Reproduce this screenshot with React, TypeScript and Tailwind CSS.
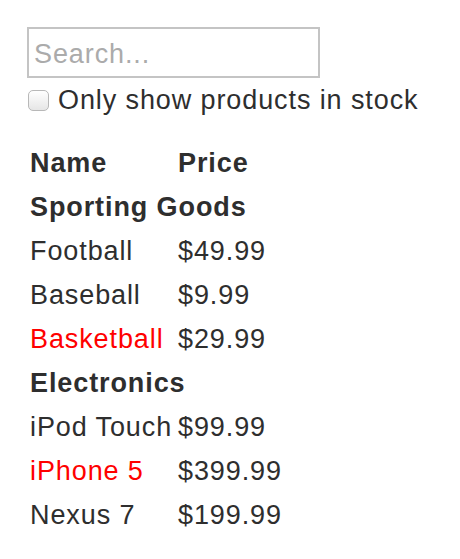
import React from 'react';

type Product = { category: string; price: string; stocked: boolean; name: string };

const products: Product[] = [
  { category: 'Sporting Goods', price: '$49.99', stocked: true, name: 'Football' },
  { category: 'Sporting Goods', price: '$9.99', stocked: true, name: 'Baseball' },
  { category: 'Sporting Goods', price: '$29.99', stocked: false, name: 'Basketball' },
  { category: 'Electronics', price: '$99.99', stocked: true, name: 'iPod Touch' },
  { category: 'Electronics', price: '$399.99', stocked: false, name: 'iPhone 5' },
  { category: 'Electronics', price: '$199.99', stocked: true, name: 'Nexus 7' },
];

const App: React.FC = () => {
  const rows: React.ReactNode[] = [];
  let lastCategory = '';
  products.forEach((p) => {
    if (p.category !== lastCategory) {
      rows.push(
        <tr key={p.category} className="h-[44px]">
          <th colSpan={2} className="text-left font-bold pl-[3px] p-0">
            {p.category}
          </th>
        </tr>
      );
      lastCategory = p.category;
    }
    rows.push(
      <tr key={p.name} className="h-[44px]">
        <td className={`pl-[3px] p-0 ${p.stocked ? '' : 'text-[#ff0000]'}`}>{p.name}</td>
        <td className="p-0">{p.price}</td>
      </tr>
    );
  });

  return (
    <div
      className="min-h-screen bg-white pl-[27px] pt-[27px] text-[27px] leading-[32px] tracking-[0.9px] text-[#2e2e2e]"
      style={{ fontFamily: '"Liberation Sans", Arial, sans-serif' }}
    >
      <input
        type="text"
        placeholder="Search..."
        className="block w-[293px] h-[51px] border-2 border-[#c4c4c4] pl-[5px] pt-[3px] outline-none placeholder:text-[#ababab]"
      />
      <label className="flex items-center gap-[9px] mt-[6px] h-[32px]">
        <span className="ml-[1px] w-[21px] h-[21px] rounded-[5px] border border-[#b8b8b8] bg-gradient-to-b from-white to-[#e6e6e6]" />
        <span>Only show products in stock</span>
      </label>
      <table className="mt-[25px] border-collapse">
        <thead>
          <tr className="h-[44px]">
            <th className="w-[151px] text-left font-bold pl-[3px] p-0">Name</th>
            <th className="text-left font-bold p-0">Price</th>
          </tr>
        </thead>
        <tbody>{rows}</tbody>
      </table>
    </div>
  );
};

export default App;
